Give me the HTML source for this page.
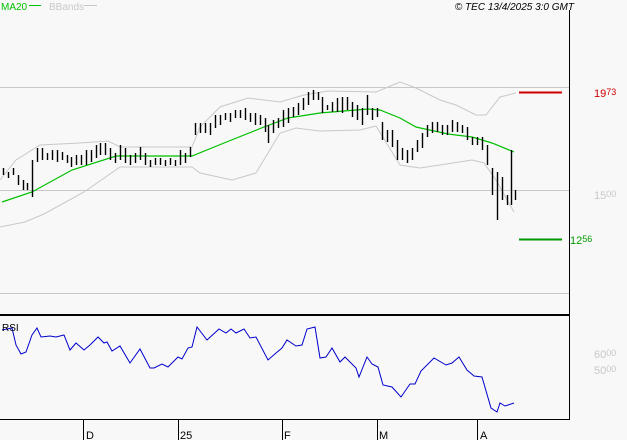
<!DOCTYPE html>
<html><head><meta charset="utf-8"><style>
html,body{margin:0;padding:0;background:#f8f8f8;}
body{width:627px;height:440px;overflow:hidden;position:relative;font-family:"Liberation Sans",sans-serif;}
svg{position:absolute;left:0;top:0;}
text{font-family:"Liberation Sans",sans-serif;}
</style></head><body>
<svg width="627" height="440" viewBox="0 0 627 440" xmlns="http://www.w3.org/2000/svg">
<rect width="627" height="440" fill="#f8f8f8"/>
<g stroke="#c8c8c8" stroke-width="1" shape-rendering="crispEdges">
<line x1="0" y1="87.5" x2="569" y2="87.5"/>
<line x1="0" y1="190.5" x2="569" y2="190.5"/>
<line x1="0" y1="293.5" x2="569" y2="293.5"/>
</g>
<g fill="none" stroke="#c8c8c8" stroke-width="1">
<polyline points="0,180 16,160 40,145 80,143 108,141 120,147 192,147 200,127 220,107 248,98 280,102 304,95 328,91 376,92 400,82 416,88 440,100 456,105 476,115 486,115 500,97 516,93"/>
<polyline points="0,227 25,222 44,214 84,192 120,167 132,167 192,167 200,173 232,180 256,173 280,133 296,128 320,131 360,130 376,126 400,165 420,168 440,165 472,160 484,163 496,180 514,212"/>
</g>
<polyline fill="none" stroke="#00c000" stroke-width="1.2" points="2,202 32,192 72,170 116,156 192,156 224,143 264,127 288,118 320,113 368,109 380,110 400,118 416,127 448,134 472,137 492,143 514,152"/>
<path fill="none" stroke="#000" stroke-width="1.4" d="
M3.5,168V175M8.5,172V178M13.5,168V175M18.5,175V185M23.5,180V190M27.5,183V190M32.5,160V197M37.5,148V162M42.5,148V160M47.5,153V160M52.5,150V160M57.5,150V162M62.5,152V160M67.5,155V163M71.5,157V167M76.5,155V165M81.5,155V165M86.5,150V165M91.5,150V162M96.5,145V158M100.5,143V155M105.5,143V155M110.5,148V160M115.5,153V163M120.5,145V160M125.5,148V163M130.5,155V165M135.5,153V163M140.5,147V160M145.5,153V165M150.5,160V167M155.5,158V165M160.5,158V165M165.5,160V166M170.5,158V165M175.5,160V166M180.5,150V165M185.5,153V163M190.5,147V157M195.5,123V135M200.5,123V133M205.5,123V133M210.5,123V135M215.5,115V128M220.5,115V125M225.5,113V120M230.5,113V122M235.5,110V118M240.5,110V118M245.5,108V120M250.5,113V122M255.5,113V125M260.5,115V125M265.5,118V132M268.5,125V143M273.5,120V133M278.5,118V128M283.5,110V127M288.5,108V123M293.5,107V117M298.5,103V115M303.5,98V110M308.5,92V105M313.5,90V100M318.5,92V100M322.5,97V113M327.5,105V110M332.5,102V112M337.5,98V112M342.5,97V113M347.5,97V110M352.5,102V117M357.5,105V120M362.5,108V125M367.5,95V115M372.5,108V120M377.5,108V117M382.5,122V140M387.5,130V142M392.5,130V147M397.5,140V160M402.5,148V160M407.5,150V163M412.5,148V160M417.5,140V152M422.5,133V148M427.5,125V137M432.5,122V133M437.5,122V132M442.5,125V135M447.5,125V135M452.5,120V132M457.5,122V132M462.5,125V133M467.5,127V140M472.5,137V145M477.5,137V145M482.5,137V150M487.5,145V165M492.5,168V195M497.5,172V220M502.5,177V200M507.5,195V205M511.5,150V205M515.5,190V200
"/>
<line x1="519" y1="92.5" x2="562" y2="92.5" stroke="#cc0000" stroke-width="2"/>
<line x1="519" y1="239.5" x2="562" y2="239.5" stroke="#009900" stroke-width="2"/>
<line x1="569.5" y1="10" x2="569.5" y2="420" stroke="#000" stroke-width="1"/>
<line x1="0" y1="315" x2="569" y2="315" stroke="#000" stroke-width="2"/>
<line x1="0" y1="419.5" x2="570" y2="419.5" stroke="#000" stroke-width="1"/>
<polyline fill="none" stroke="#0000cc" stroke-width="1" points="2,330 12,328 16,345 21,354 26,352 32,335 37,328 41,337 50,336 56,337 64,335 70,350 76,343 84,350 90,345 98,337 104,343 107,342 112,351 120,346 130,363 140,349 150,368 154,368 162,364 168,367 178,357 182,359 188,348 192,347 197,327 207,340 219,329 226,333 231,329 236,333 244,329 250,338 256,337 268,360 276,353 282,348 287,340 296,346 302,345 307,329 315,327 320,358 326,357 332,348 340,362 345,357 356,368 359,377 367,357 372,364 378,367 383,385 392,387 401,397 410,384 415,384 421,371 434,358 446,365 452,363 459,357 467,370 474,376 482,377 491,408 497,412 500,403 505,406 514,403"/>
<g stroke="#000" stroke-width="1">
<line x1="83.5" y1="420" x2="83.5" y2="440"/>
<line x1="178.5" y1="420" x2="178.5" y2="440"/>
<line x1="282.5" y1="420" x2="282.5" y2="440"/>
<line x1="377.5" y1="420" x2="377.5" y2="440"/>
<line x1="477.5" y1="420" x2="477.5" y2="440"/>
</g>
<g font-size="11" fill="#000">
<text x="86" y="439">D</text>
<text x="180" y="439">25</text>
<text x="284" y="439">F</text>
<text x="379" y="439">M</text>
<text x="480" y="439">A</text>
</g>
<text x="2" y="331" font-size="10" fill="#000">RSI</text>
<text x="1" y="10" font-size="10" fill="#00c000">MA20</text>
<line x1="29" y1="5.5" x2="41" y2="5.5" stroke="#00c000" stroke-width="1"/>
<text x="49" y="10" font-size="10" fill="#c8c8c8">BBands</text>
<line x1="84" y1="5.5" x2="97" y2="5.5" stroke="#c8c8c8" stroke-width="1"/>
<text x="574" y="10" font-size="10" font-style="italic" fill="#000" text-anchor="end">© TEC 13/4/2025 3:0 GMT</text>
<text x="594" y="97" font-size="11" fill="#cc0000">19<tspan font-size="9" dy="-2">73</tspan></text>
<text x="594" y="199" font-size="11" fill="#c8c8c8">15<tspan font-size="9" dy="-2">00</tspan></text>
<text x="570" y="244" font-size="11" fill="#009900">12<tspan font-size="9" dy="-2">56</tspan></text>
<text x="594" y="358" font-size="11" fill="#c8c8c8">60<tspan font-size="9" dy="-2">00</tspan></text>
<text x="594" y="374" font-size="11" fill="#c8c8c8">50<tspan font-size="9" dy="-2">00</tspan></text>
</svg>
</body></html>
